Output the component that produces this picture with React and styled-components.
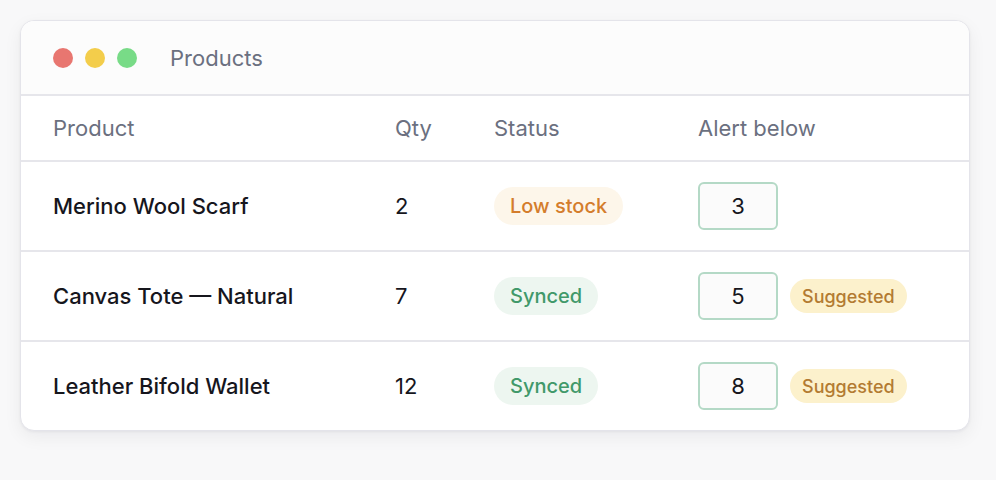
import React from 'react';
import styled, { createGlobalStyle } from 'styled-components';

const GlobalStyle = createGlobalStyle`
  body {
    margin: 0;
    background: #f8f8f9;
    font-family: Inter, "Noto Sans", sans-serif;
  }
`;

const products = [
  { name: 'Merino Wool Scarf', qty: 2, status: 'low', alert: 3, suggested: false },
  { name: 'Canvas Tote — Natural', qty: 7, status: 'synced', alert: 5, suggested: true },
  { name: 'Leather Bifold Wallet', qty: 12, status: 'synced', alert: 8, suggested: true },
];

const App = () => {
  return (
    <Page>
      <GlobalStyle />
      <Card>
        <TitleBar>
          <Dots>
            <Dot color="#e87670" />
            <Dot color="#f3cd4b" />
            <Dot color="#78db87" />
          </Dots>
          <WindowTitle>Products</WindowTitle>
        </TitleBar>
        <HeaderRow>
          <HeadCell>Product</HeadCell>
          <HeadCell>Qty</HeadCell>
          <HeadCell>Status</HeadCell>
          <HeadCell>Alert below</HeadCell>
        </HeaderRow>
        {products.map((p, i) => (
          <Row key={p.name} last={i === products.length - 1}>
            <Name>{p.name}</Name>
            <Qty>{p.qty}</Qty>
            <div>
              <StatusPill status={p.status}>
                {p.status === 'low' ? 'Low stock' : 'Synced'}
              </StatusPill>
            </div>
            <AlertCell>
              <AlertInput>{p.alert}</AlertInput>
              {p.suggested && <Suggested>Suggested</Suggested>}
            </AlertCell>
          </Row>
        ))}
      </Card>
    </Page>
  );
};

const Page = styled.div`
  padding: 20px 26px 40px 20px;
`;

const Card = styled.div`
  width: 950px;
  box-sizing: border-box;
  background: #fff;
  border: 1px solid #e4e4ea;
  border-radius: 14px;
  overflow: hidden;
  box-shadow: 0 6px 18px rgba(20, 20, 40, 0.06), 0 1px 3px rgba(20, 20, 40, 0.05);
`;

const TitleBar = styled.div`
  height: 73px;
  display: flex;
  align-items: center;
  padding-left: 32px;
  background: #fcfcfc;
  border-bottom: 2px solid #e6e6eb;
`;

const Dots = styled.div`
  display: flex;
  gap: 12px;
  margin-right: 33px;
`;

const Dot = styled.span`
  width: 20px;
  height: 20px;
  border-radius: 50%;
  background: ${props => props.color};
`;

const WindowTitle = styled.span`
  font-size: 22px;
  color: #6b7080;
`;

const grid = `
  display: grid;
  grid-template-columns: 342px 99px 204px 1fr;
  align-items: center;
  padding-left: 32px;
`;

const HeaderRow = styled.div`
  ${grid}
  height: 64px;
  border-bottom: 2px solid #e6e6eb;
`;

const HeadCell = styled.div`
  font-size: 22px;
  color: #6b7080;
`;

const Row = styled.div`
  ${grid}
  height: 88px;
  border-bottom: ${props => props.last ? 'none' : '2px solid #e6e6eb'};
`;

const Name = styled.div`
  font-size: 22px;
  font-weight: 500;
  color: #16161d;
`;

const Qty = styled.div`
  font-size: 22px;
  color: #16161d;
`;

const StatusPill = styled.span`
  display: inline-flex;
  align-items: center;
  height: 38px;
  padding: 0 16px;
  border-radius: 19px;
  font-size: 20px;
  font-weight: 500;
  background: ${props => props.status === 'low' ? '#fdf6ea' : '#edf6f0'};
  color: ${props => props.status === 'low' ? '#d47d2c' : '#41996a'};
`;

const AlertCell = styled.div`
  display: flex;
  align-items: center;
  gap: 12px;
`;

const AlertInput = styled.div`
  width: 80px;
  height: 48px;
  box-sizing: border-box;
  border: 2px solid #b4d9c6;
  border-radius: 6px;
  background: #fbfbfb;
  display: flex;
  align-items: center;
  justify-content: center;
  font-size: 22px;
  color: #16161d;
`;

const Suggested = styled.span`
  display: inline-flex;
  align-items: center;
  height: 34px;
  padding: 0 12px;
  border-radius: 17px;
  background: #fcf1cc;
  color: #b37b32;
  font-size: 18px;
  font-weight: 500;
`;

export default App;
